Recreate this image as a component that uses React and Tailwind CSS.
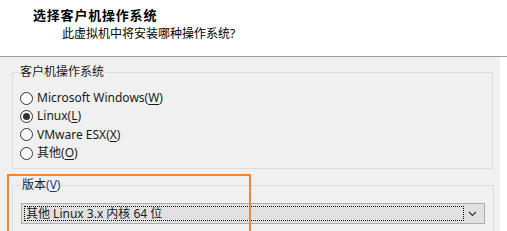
import { useState } from 'react'

const font = { fontFamily: '"Noto Sans", "Noto Sans CJK SC", sans-serif' }

function Mnemonic({ label, letter }) {
    return (
        <span>
            {label}(<span className="underline underline-offset-2">{letter}</span>)
        </span>
    )
}

function Radio({ checked, onSelect, children }) {
    return (
        <label className="flex h-[18.3px] cursor-default items-center gap-[4px]" onClick={onSelect}>
            <svg width="13" height="13" viewBox="0 0 13 13" className="shrink-0">
                <circle cx="6.5" cy="6.5" r="6" fill="#fff" stroke="#333" strokeWidth="1" />
                {checked && <circle cx="6.5" cy="6.5" r="3.5" fill="#333" />}
            </svg>
            <span>{children}</span>
        </label>
    )
}

export default function App() {
    const [os, setOs] = useState('linux')

    const options = [
        { id: 'windows', label: 'Microsoft Windows', letter: 'W' },
        { id: 'linux', label: 'Linux', letter: 'L' },
        { id: 'esx', label: 'VMware ESX', letter: 'X' },
        { id: 'other', label: '其他', letter: 'O' },
    ]

    return (
        <div className="relative h-[231px] w-[507px] overflow-hidden bg-white text-[12px] text-[#1a1a1a]" style={font}>
            {/* header */}
            <div className="h-[57px] border-b border-[#a0a0a0] pt-[5px]">
                <div className="pl-[33px] text-[13px] font-bold leading-[20px] tracking-[0.8px] text-black">
                    选择客户机操作系统
                </div>
                <div className="pl-[62px] leading-[18px] text-black">此虚拟机中将安装哪种操作系统?</div>
            </div>

            {/* body */}
            <div className="flex">
                <div className="h-[180px] w-[500px] bg-[#f0f0f0] px-[12px] pt-[7px]">
                    <fieldset className="h-[105px] w-[481px] border border-[#dcdcdc] px-[7px]">
                        <legend className="-ml-[1px] px-[1px] leading-[16px]">客户机操作系统</legend>
                        <div className="mt-[9px] flex flex-col">
                            {options.map((o) => (
                                <Radio key={o.id} checked={os === o.id} onSelect={() => setOs(o.id)}>
                                    <Mnemonic label={o.label} letter={o.letter} />
                                </Radio>
                            ))}
                        </div>
                    </fieldset>

                    <fieldset className="mt-[8px] h-[80px] w-[481px] border border-[#dcdcdc] px-[8px]">
                        <legend className="px-[1px] leading-[16px]">
                            版本<span className="text-[#1e3a8a]">(<span className="underline underline-offset-2">V</span>)</span>
                        </legend>
                        <div className="mt-[10px] flex h-[21px] w-[464px] items-center border border-[#adadad] bg-[#e1e1e1] pl-[2px] pr-[3px]">
                            <div className="flex h-[15px] flex-1 items-center border border-dotted border-black pl-[1px] leading-none">
                                其他 Linux 3.x 内核 64 位
                            </div>
                            <svg width="17" height="15" viewBox="0 0 17 15" className="shrink-0">
                                <path d="M5 6 L8.5 9.5 L12 6" fill="none" stroke="#333" strokeWidth="1.2" />
                            </svg>
                        </div>
                    </fieldset>
                </div>
                <div className="flex-1 bg-white" />
            </div>

            {/* highlight annotation */}
            <div className="pointer-events-none absolute left-[7px] top-[174px] h-[80px] w-[244px] border-2 border-[#f5862e]" />
        </div>
    )
}
